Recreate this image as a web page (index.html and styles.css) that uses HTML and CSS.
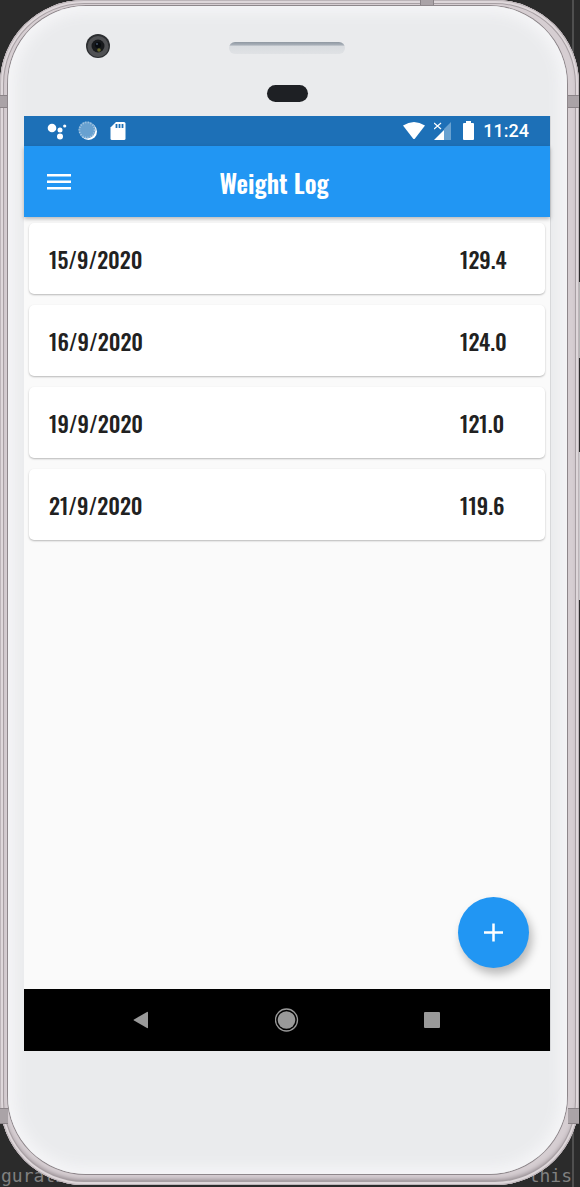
FILE: index.html
```html
<!DOCTYPE html>
<html lang="en">
<head>
<meta charset="utf-8">
<meta name="viewport" content="width=device-width, initial-scale=1">
<title>Weight Log</title>
<link rel="stylesheet" href="styles.css">
</head>
<body>
<div class="desk">
  <p class="editor-line"><span>guration</span><span>this</span></p>
  <span class="side-key power"></span>
  <span class="side-key volume"></span>
  <div class="phone">
    <span class="antenna top"></span>
    <span class="antenna upper-left"></span>
    <span class="antenna upper-right"></span>
    <span class="antenna lower-left"></span>
    <span class="antenna lower-right"></span>
    <div class="face">
      <div class="bezel">
        <svg class="camera" viewBox="0 0 24 24" aria-hidden="true">
          <circle cx="12" cy="12" r="12" fill="#2c2e31"/>
          <circle cx="12" cy="12.500" r="10.500" fill="#505154"/>
          <circle cx="12" cy="12" r="6.500" fill="#17191c"/>
          <circle cx="12" cy="11" r="3" fill="#080b10"/>
          <circle cx="11" cy="10" r="1" fill="#415064"/>
          <circle cx="13" cy="16" r="1.800" fill="#68682c"/>
        </svg>
        <div class="sensors"><span class="speaker"></span><span class="proximity"></span></div>
      </div>
      <div class="screen">
        <div class="status">
          <div class="status-group left">
            <svg width="20" height="20" viewBox="0 0 20 20" fill="#fff" aria-hidden="true"><circle cx="5" cy="7" r="4.300"/><circle cx="13" cy="9" r="2.500"/><circle cx="13" cy="15.500" r="3"/><circle cx="17.700" cy="5" r="1.600"/></svg>
            <svg width="20" height="20" viewBox="0 0 20 20" aria-hidden="true"><circle cx="10.500" cy="10.500" r="8.500" fill="#fff"/><circle cx="9" cy="9" r="8.500" fill="#68a1d0"/><circle cx="9" cy="9" r="7.600" fill="none" stroke="#a5c7e3" stroke-width="1.800" stroke-dasharray="1 1.600"/></svg>
            <svg width="20" height="20" viewBox="0 0 20 20" aria-hidden="true"><path fill="#fff" d="M7 1h8q1.500 0 1.500 1.500v15q0 1.500-1.500 1.500h-12Q1.500 19 1.500 17.500V6.500z"/><path stroke="#1d70b7" stroke-width="1.800" d="M7.500 3v4M10.500 3v4M13.500 3v4"/></svg>
          </div>
          <div class="status-group right">
            <svg width="22" height="20" viewBox="0 0 22 20" aria-hidden="true"><path fill="#fff" d="M0 4.500Q11-2.500 22 4.500L12 17.500q-1 1-2 0z"/></svg>
            <svg width="20" height="20" viewBox="0 0 20 20" aria-hidden="true"><path fill="#68a1d0" d="M17 1v18H10V8z"/><path fill="#fff" d="M10 9v10H0z"/><path stroke="#fff" stroke-width="1.300" d="M0 2l7 6M7 2L0 8"/></svg>
            <svg width="11" height="20" viewBox="0 0 11 20" aria-hidden="true"><path fill="#fff" d="M3 0h5v2h2q1 0 1 1v15q0 1-1 1H1q-1 0-1-1V3q0-1 1-1h2z"/></svg>
            <time>11:24</time>
          </div>
        </div>
        <header class="app-bar">
          <button class="menu" type="button" aria-label="Open menu"><svg width="24" height="18" viewBox="0 0 24 18" aria-hidden="true"><path fill="#fff" d="M0 1h24v2.500H0zM0 7.500h24v2.500H0zM0 14h24v2.500H0z"/></svg></button>
          <h1>Weight Log</h1>
        </header>
        <main class="content">
          <ul class="log">
            <li><time>15/9/2020</time><span>129.4</span></li>
            <li><time>16/9/2020</time><span>124.0</span></li>
            <li><time>19/9/2020</time><span>121.0</span></li>
            <li><time>21/9/2020</time><span>119.6</span></li>
          </ul>
          <button class="add" type="button" aria-label="Add entry"><svg width="20" height="20" viewBox="0 0 20 20" aria-hidden="true"><path stroke="#fff" stroke-width="2.500" d="M9.500 0.500v18M0 9.500h19"/></svg></button>
        </main>
        <nav class="system-nav">
          <button type="button" aria-label="Back"><svg width="24" height="24" viewBox="0 0 24 24" aria-hidden="true"><path fill="#999" d="M19 4.500v15q0 1-1 .500L5 12.600q-1-.600 0-1.200L18 4q1-.500 1 .500z"/></svg></button>
          <button type="button" aria-label="Home"><svg width="24" height="24" viewBox="0 0 24 24" aria-hidden="true"><circle cx="11.500" cy="12" r="11" fill="none" stroke="#999" stroke-width="1.300"/><circle cx="11.500" cy="12" r="8.800" fill="#999"/></svg></button>
          <button type="button" aria-label="Recent apps"><svg width="24" height="24" viewBox="0 0 24 24" aria-hidden="true"><rect x="3" y="4" width="16" height="16" rx="1" fill="#999"/></svg></button>
        </nav>
      </div>
    </div>
  </div>
</div>
</body>
</html>
```
FILE: styles.css
```css
* { box-sizing: border-box; }

body {
  margin: 0;
  background: #2b2b2b;
  font-family: Roboto, "Liberation Sans", sans-serif;
}

button {
  display: grid;
  place-items: center;
  padding: 0;
  border: 0;
  background: none;
}

svg { display: block; }

.desk {
  position: relative;
  min-height: 100vh;
  padding: 0 1px 3px 0;
  overflow: hidden;
  background: linear-gradient(#4f4f4f, #4f4f4f) right 6px top / 2px 100% no-repeat #2b2b2b;
}

.editor-line {
  position: absolute;
  right: 8px;
  bottom: 0;
  left: 1px;
  display: flex;
  justify-content: space-between;
  margin: 0;
  color: #808080;
  font: 18px/24px "DejaVu Sans Mono", monospace;
}

.side-key {
  position: absolute;
  right: 0;
  width: 3px;
  background: #b5b5b5;
}

.power { top: 282px; height: 76px; }
.volume { top: 452px; height: 148px; background: #cbc8cb; }

.phone {
  position: relative;
  padding: 6px 12px 11px 8px;
  border-radius: 84px;
  background: #d6ced2;
  box-shadow:
    inset 0 0 0 1px #bdb5b9,
    inset 0 0 0 3px #ded7da,
    inset 0 0 0 4px #a79fa3,
    inset 0 -4px 5px 1px #8c8388;
}

.antenna {
  position: absolute;
  width: 8px;
  height: 13px;
  border: solid #8a8387;
  border-width: 1px 0;
  background: #aaa3a7;
}

.top { top: 0; right: 145px; width: 14px; height: 6px; border-width: 0 1px; }
.upper-left { top: 95px; left: 0; }
.upper-right { top: 95px; right: 0; width: 11px; }
.lower-left { bottom: 61px; left: 0; height: 16px; }
.lower-right { bottom: 61px; right: 0; width: 11px; height: 16px; }

.face {
  position: relative;
  padding: 0 17px 123px 16px;
  border-radius: 78px;
  background: #eaebed;
  box-shadow:
    0 0 0 1px #8e878b,
    inset 0 0 14px 7px #f5f5f7;
}

.bezel {
  display: grid;
  grid-template-columns: 1fr auto 1fr;
  height: 110px;
}

.camera {
  width: 24px;
  height: 24px;
  margin: 28px 0 0 62px;
}

.sensors {
  display: flex;
  flex-direction: column;
  align-items: center;
  gap: 31px;
  padding-top: 36px;
}

.speaker {
  width: 116px;
  height: 12px;
  border-radius: 6px;
  background: linear-gradient(#8f98a2, #a9b0b9 25%, #d9dce0 35%, #e0e2e5);
}

.proximity {
  width: 41px;
  height: 17px;
  border-radius: 9px;
  background: #1e2024;
}

.screen {
  display: flex;
  flex-direction: column;
  background: #fafafa;
  box-shadow: 1px 0 #d7d8da;
}

.status {
  display: flex;
  justify-content: space-between;
  height: 30px;
  padding: 0 21px 0 23px;
  background: #1d70b7;
}

.status-group {
  display: flex;
  align-items: center;
}

.left { gap: 11px; }
.right { gap: 9px; }

.status time {
  color: #fff;
  font-size: 18px;
  font-weight: 500;
  line-height: 32px;
}

.app-bar {
  position: relative;
  display: grid;
  grid-template-columns: 70px 1fr 96px;
  align-items: center;
  height: 71px;
  background: #2196f3;
  box-shadow: 0 2px 4px #0004;
}

.menu { height: 71px; }

h1 {
  margin: 0;
  padding-top: 2px;
  color: #fff;
  font: 600 25px/40px Oswald, "Liberation Sans Narrow", sans-serif;
  text-align: center;
  white-space: nowrap;
}

.content {
  position: relative;
  min-height: 772px;
  padding: 6px 5px;
}

.log {
  display: grid;
  gap: 11px;
  margin: 0;
  padding: 0;
  list-style: none;
}

.log li {
  display: grid;
  grid-template-columns: 1fr 65px;
  align-items: center;
  height: 71px;
  padding: 0 20px;
  border-radius: 5px;
  background: #fff;
  box-shadow: 0 1px 2px #0004;
  color: #212121;
  font: 500 22px/36px Oswald, "Liberation Sans Narrow", sans-serif;
}

.add {
  position: absolute;
  right: 21px;
  bottom: 21px;
  width: 71px;
  height: 71px;
  border-radius: 50%;
  background: #2196f3;
  box-shadow: 3px 6px 10px #0004;
}

.system-nav {
  display: grid;
  grid-template-columns: repeat(3, 146px);
  justify-content: center;
  height: 62px;
  background: #000;
}
```
